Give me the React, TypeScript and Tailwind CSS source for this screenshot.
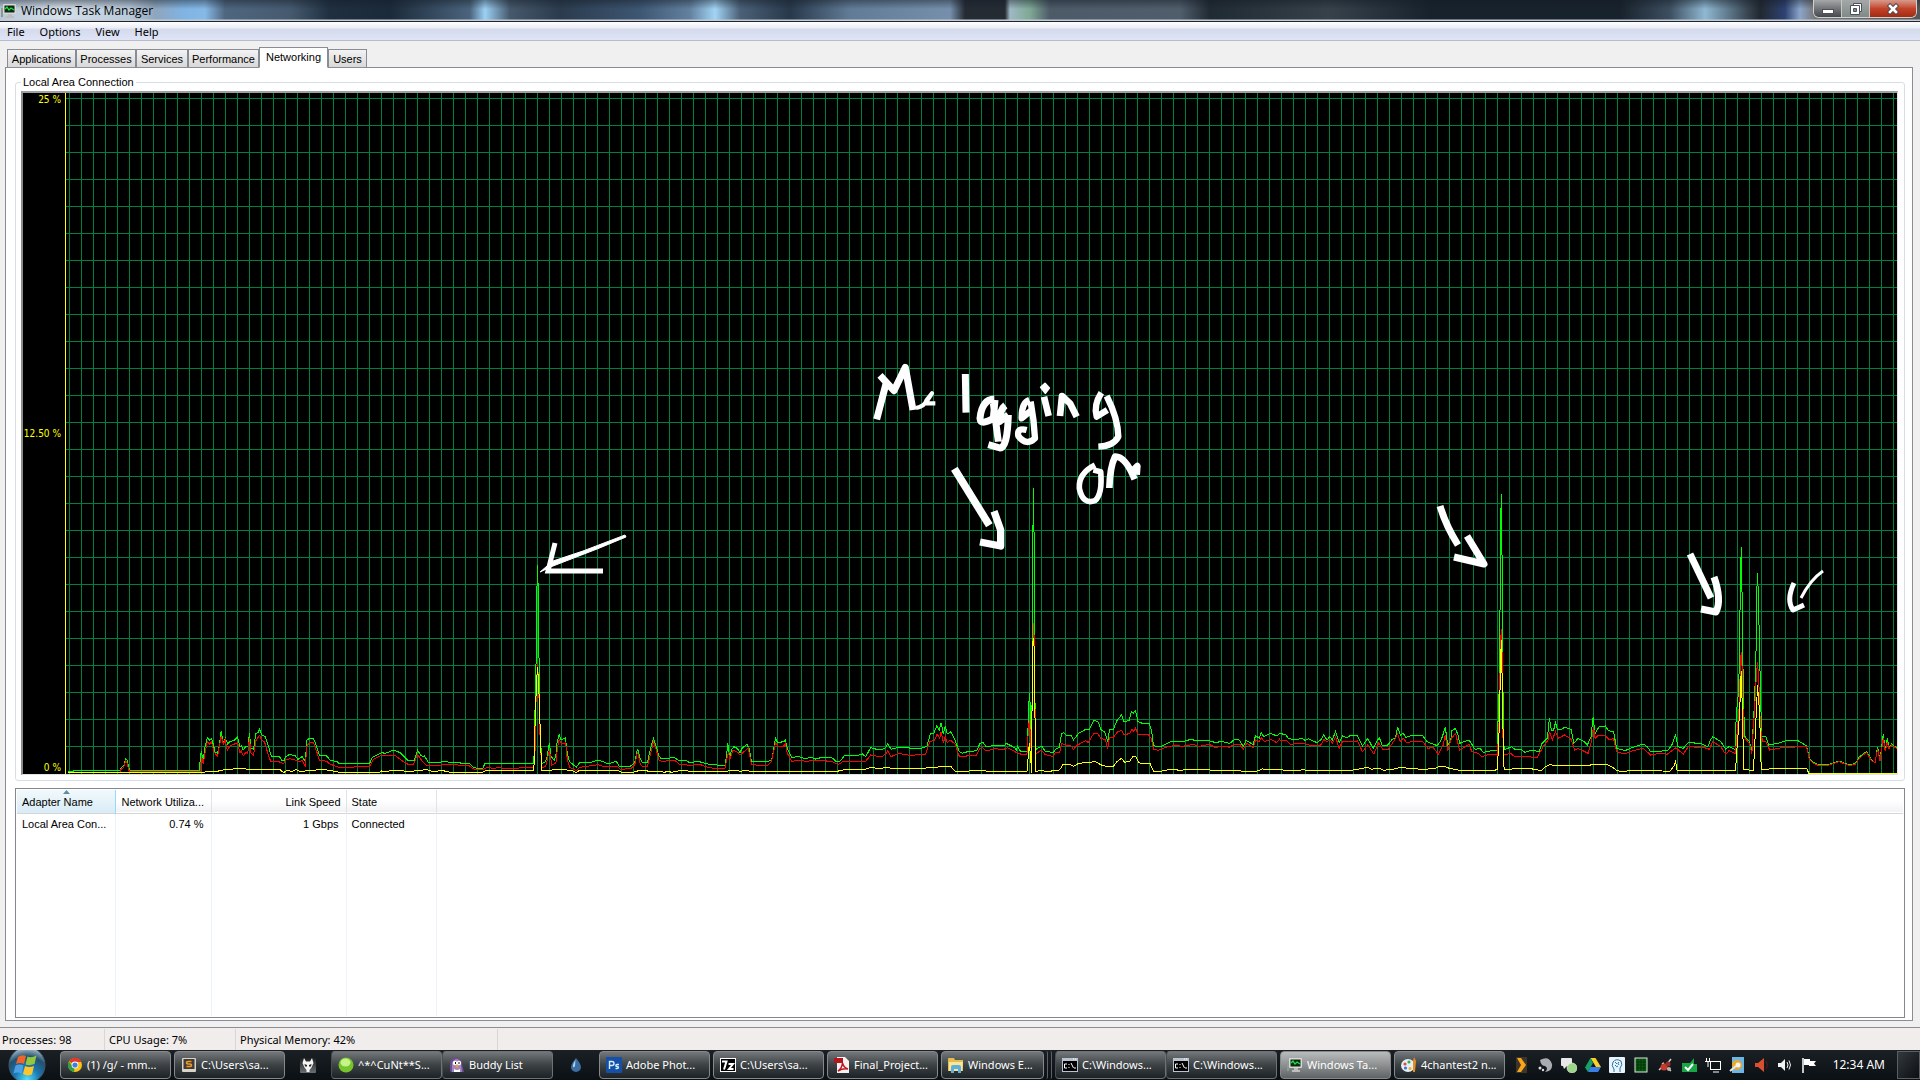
import type { ReactNode } from "react";

type Segment = { transform: string; green: string; red: string; yellow: string };

// Throughput samples, stored oversampled and scaled into chart space by each segment's transform.
const SEGMENTS: Segment[] = [
  {
    transform: "translate(0 560) scale(0.40816 0.33333)",
    green:
      "167,634 180,634 182,631 295,631 297,622 303,620 305,608 308,596 312,602 315,622 318,631 488,631 490,605 493,574 498,602 501,568 508,532 513,541 518,535 522,551 527,576 533,580 537,558 542,512 547,550 552,534 558,552 563,545 575,540 582,531 588,562 591,556 596,570 602,560 608,558 611,518 615,565 621,568 627,520 632,518 636,508 641,525 650,530 658,560 665,590 685,590 690,601 696,602 700,590 710,583 724,588 730,598 740,590 748,604 752,540 758,535 768,535 776,560 782,585 800,588 810,602 825,604 832,612 905,612 912,592 935,578 944,580 965,570 980,578 990,590 1000,602 1015,602 1023,570 1030,585 1036,590 1040,588 1050,608 1070,608 1090,604 1105,608 1150,610 1160,622 1170,625 1183,625 1188,610 1308,610 1310,490 1313,340 1315,110 1317,15 1319,110 1321,340 1323,490 1327,610 1335,608 1340,592 1346,548 1350,590 1358,600 1362,585 1365,545 1370,524 1375,540 1385,533 1390,580 1395,604 1412,622 1420,608 1450,606 1465,600 1480,606 1490,612 1510,604 1518,620 1545,618 1555,608 1562,566 1568,595",
    red:
      "167,638 295,637 296,629 303,622 308,602 312,610 315,629 318,636 490,636 494,590 498,612 503,575 508,545 513,552 518,546 524,575 533,590 542,528 547,552 552,540 557,572 563,558 582,548 588,578 591,572 596,588 602,578 607,580 611,535 615,580 621,585 627,542 636,526 641,540 648,545 655,575 663,604 685,606 695,612 700,600 710,596 728,602 735,605 740,602 748,618 752,558 758,548 768,548 778,582 782,600 800,604 808,612 830,622 905,620 915,598 932,588 970,588 985,602 1000,613 1013,614 1023,582 1033,602 1046,618 1070,618 1095,612 1150,618 1160,627 1183,628 1200,620 1205,626 1225,622 1235,626 1308,622 1311,570 1314,380 1317,310 1320,380 1322,500 1327,622 1337,620 1346,570 1352,615 1362,610 1366,560 1370,538 1376,552 1386,548 1390,600 1396,622 1412,632 1420,622 1465,614 1480,620 1512,618 1520,628 1545,626 1555,615 1562,575 1568,608",
    yellow:
      "167,638 500,637 507,634 533,634 540,631 560,628 590,625 610,628 685,628 695,638 702,631 715,634 725,629 735,634 760,632 790,628 812,632 832,637 930,637 935,633 945,636 960,631 985,632 1000,635 1045,629 1060,634 1085,632 1105,637 1183,637 1190,631 1308,631 1311,490 1314,380 1317,320 1320,380 1323,490 1327,631 1345,631 1370,628 1400,631 1412,638 1420,631 1515,631 1522,637 1550,637 1568,631",
  },
  {
    transform: "translate(640 560) scale(0.40816 0.33333)",
    green:
      "0,595 5,607 18,608 25,570 33,535 40,560 45,585 52,596 85,593 95,602 112,600 120,607 145,605 170,613 208,617 212,590 215,550 220,595 224,570 230,560 238,565 245,578 250,565 262,553 268,568 273,604 300,606 322,602 328,565 332,535 337,548 352,545 356,540 361,565 372,592 390,590 405,596 420,592 430,597 440,594 470,593 480,604 490,604 500,588 530,588 545,582 553,590 565,563 580,568 592,570 602,563 607,550 615,568 630,563 655,562 668,567 690,565 703,558 712,520 720,520 727,498 733,510 738,488 743,522 748,498 753,522 762,515 772,540 782,575 790,580 800,576 825,572 833,550 840,547 848,560 870,556 892,558 897,550 918,563 922,570 925,558 932,574 949,573 952,450 954,400 957,450 959,573 961,380 962,-18 964,-216 966,-18 967,380 970,568 985,558 992,573 1012,578 1020,565 1027,563 1033,520 1038,518 1045,527 1057,528 1062,540 1075,520 1092,508 1100,510 1112,480 1122,485 1130,510 1138,515 1146,545 1150,510 1160,507 1170,478 1180,465 1186,485 1198,482 1204,455 1208,460 1214,452 1220,485 1235,492 1247,490 1253,510 1258,555 1265,560 1280,558 1300,545 1335,543 1350,538 1365,543 1390,540 1410,548 1425,544 1445,550 1455,540 1468,540 1478,560 1485,541 1495,548 1502,555 1508,527 1517,535 1522,518 1528,530 1545,520 1560,528 1568,520",
    red:
      "0,610 5,619 18,619 25,585 33,545 40,570 47,602 55,604 85,601 97,613 125,616 145,612 160,620 180,625 208,625 212,600 217,575 220,600 228,570 240,577 245,585 255,575 265,563 273,612 290,617 312,616 322,605 332,548 340,560 352,558 356,550 361,580 372,604 395,600 405,604 430,601 470,604 485,614 497,605 520,604 553,604 565,585 592,591 602,582 607,571 615,590 633,580 660,586 700,583 710,545 722,540 728,522 734,535 738,515 743,548 748,530 753,548 760,540 772,552 782,588 795,590 805,586 823,588 833,565 840,563 848,573 870,566 890,569 900,563 920,576 932,582 948,584 952,500 954,480 957,530 959,600 961,400 963,240 964,190 966,240 967,400 970,582 983,570 992,583 1012,590 1018,577 1028,577 1034,550 1045,558 1055,556 1062,568 1072,555 1092,542 1098,548 1112,520 1122,522 1130,536 1140,538 1146,566 1150,532 1160,532 1170,515 1180,512 1186,525 1200,520 1205,508 1210,515 1214,505 1220,522 1245,524 1253,535 1258,568 1270,571 1285,563 1310,556 1330,559 1355,553 1370,559 1395,553 1410,563 1425,558 1445,562 1455,553 1470,553 1478,568 1487,549 1502,563 1508,540 1517,545 1522,532 1530,545 1545,538 1560,548 1568,536",
    yellow:
      "0,631 15,631 20,634 50,634 60,637 68,634 78,637 85,634 110,631 120,634 210,634 225,631 235,631 245,634 260,631 270,634 483,634 500,629 550,628 568,622 585,626 605,622 620,626 690,625 740,620 762,620 772,634 805,634 810,631 840,631 850,634 948,634 954,550 958,610 959,640 961,380 963,235 965,235 967,372 969,634 985,631 998,636 1015,631 1028,630 1037,612 1055,614 1062,619 1075,610 1115,605 1132,616 1145,620 1160,619 1168,605 1180,595 1187,607 1200,604 1207,590 1215,590 1222,608 1235,612 1250,612 1258,634 1280,633 1300,628 1325,631 1345,628 1390,628 1400,631 1465,631 1475,634 1510,634 1525,627 1568,628",
  },
  {
    transform: "translate(1280 480) scale(0.40816 0.33333)",
    green:
      "0,760 15,765 20,775 35,780 55,775 62,782 70,776 90,788 100,780 107,765 115,780 122,770 128,780 136,755 145,788 153,768 165,773 170,768 190,768 202,798 215,775 228,805 243,772 250,795 262,798 275,778 283,775 288,740 295,765 302,760 308,772 320,767 350,767 360,785 385,797 395,780 405,742 411,795 418,785 421,752 430,745 436,765 440,790 463,780 478,808 490,805 498,817 510,814 532,810 535,690 538,600 540,200 542,42 544,232 546,610 549,810 558,805 568,800 575,808 590,808 600,817 618,810 635,815 642,790 655,775 660,715 665,750 670,752 675,728 680,748 690,748 697,742 713,748 720,790 730,775 745,785 753,795 762,770 767,712 772,760 782,740 797,738 805,752 817,755 825,805 845,812 865,802 890,792 900,800 908,815 950,812 960,795 969,765 975,800 988,805 1000,788 1030,790 1048,800 1055,780 1060,770 1080,785 1092,808 1100,800 1115,808 1118,700 1124,630 1128,315 1130,202 1132,340 1135,625 1138,768 1150,785 1156,810 1162,680 1166,540 1168,340 1170,280 1172,345 1176,570 1180,770 1190,768 1197,795 1220,790 1245,780 1270,783 1290,797 1297,835 1305,845 1320,855 1345,853 1370,843 1395,855 1410,850 1420,830 1437,815 1450,840 1458,848 1464,800 1470,840 1478,763 1483,810 1488,775 1492,805 1498,792 1513,805",
    red:
      "0,780 18,783 25,793 45,790 60,790 75,797 100,795 107,778 115,785 122,778 128,790 136,770 145,805 153,785 190,783 202,815 215,795 230,822 242,788 252,808 265,808 278,785 288,762 295,785 302,775 310,788 325,784 350,785 362,805 375,802 388,823 400,795 405,765 411,812 420,775 430,760 440,810 463,793 470,815 485,820 495,830 515,822 532,825 536,765 540,520 542,447 544,520 546,765 549,825 565,820 572,828 600,830 630,832 645,800 657,780 660,755 667,780 675,755 682,775 697,765 712,775 722,810 730,805 755,820 762,790 768,740 772,775 780,765 797,768 807,780 817,775 825,815 845,822 865,812 890,805 908,825 930,820 948,823 970,803 988,823 1000,800 1040,803 1052,808 1060,785 1080,800 1092,823 1100,812 1115,820 1118,790 1125,680 1128,560 1130,515 1132,560 1136,770 1150,790 1156,822 1163,680 1167,590 1170,547 1173,600 1177,740 1182,785 1190,785 1200,810 1235,802 1290,800 1297,838 1305,848 1320,857 1345,855 1370,845 1395,857 1410,852 1420,834 1437,817 1450,843 1458,848 1464,806 1470,844 1478,775 1483,814 1488,785 1492,807 1498,795 1513,807",
    yellow:
      "0,868 18,873 45,873 55,868 70,873 90,870 125,873 150,873 175,871 190,868 215,862 225,868 240,864 255,871 285,866 295,862 320,866 355,868 380,865 390,859 405,860 415,865 440,871 532,870 536,790 540,580 542,480 544,580 547,790 549,868 610,865 640,872 650,860 663,853 670,857 755,858 765,853 800,853 815,862 825,872 845,876 855,871 900,871 955,874 965,858 969,845 973,871 1080,871 1090,873 1116,873 1120,800 1126,700 1130,572 1133,700 1136,868 1160,872 1166,720 1170,615 1175,700 1179,868 1200,867 1225,865 1290,865 1296,880 1513,880",
  },
];

const GRID_COLUMNS = Array.from({ length: 153 }, (_, i) => 69 + i * 12);
const GRID_ROWS = Array.from({ length: 25 }, (_, i) => 98 + i * 27);

function Trace({ points, color }: { points: string; color: string }) {
  return <polyline points={points} fill="none" stroke={color} strokeWidth="1" vectorEffect="non-scaling-stroke" />;
}

function Scribbles() {
  return (
    <g fill="none" stroke="#fff" strokeWidth="7" strokeLinejoin="round">
      <g transform="translate(860 350) scale(0.33333)" strokeWidth="20">
        <path d="M60 76 L79 97 L50 208 M79 97 L102 122 L136 52 L159 180" strokeWidth="21" />
        <path d="M168 174 Q195 168 200 150 L216 130 L196 160 L226 160" strokeWidth="13" />
        <path d="M316 72 L318 188" strokeWidth="21" />
        <path d="M403 147 Q366 148 360 205 Q362 228 400 205 L405 150 M400 160 L415 275 M436 166 Q420 178 418 215 L445 195 M445 195 Q442 295 420 294 L385 284" strokeWidth="21" />
        <path d="M508 150 Q484 158 485 205 L515 180 M512 155 Q522 210 525 265 Q500 290 475 258 Q470 232 500 240" strokeWidth="19" />
        <path d="M542 112 L555 100 L568 114 L556 130 Z" strokeWidth="5" fill="#fff" />
        <path d="M552 140 L566 198 M600 198 L606 138 L630 160 L650 200" strokeWidth="20" />
        <path d="M724 128 Q700 165 710 200 L742 180 M740 138 Q774 205 775 260 Q760 288 715 290" strokeWidth="19" />
        <path d="M705 345 Q655 370 658 415 Q668 465 705 452 Q728 432 722 365 L700 360" strokeWidth="17" />
        <path d="M748 414 Q750 350 765 320 Q796 318 824 388 M815 365 L832 348 L830 374" strokeWidth="20" />
        <path d="M283 356 L388 526" strokeWidth="23" />
        <path d="M402 484 L422 540 L422 588 L360 576" strokeWidth="22" />
      </g>
      <path d="M540 572 L553 561 L583 551 L625 535 L626 537 L597 549 L553 566 Z" fill="#fff" strokeWidth="1" />
      <path d="M555 543 L548 571 L603 571" strokeWidth="5" strokeLinejoin="miter" />
      <path d="M1440 506 Q1446 526 1458 545" />
      <path d="M1467 536 L1484 564 L1454 557" />
      <path d="M1690 554 Q1700 575 1711 598" />
      <path d="M1714 577 Q1722 600 1716 612 L1701 609" />
      <path d="M1794 583 Q1786 600 1793 610 L1804 605" strokeWidth="5" />
      <path d="M1823 571 Q1810 580 1801 598" strokeWidth="3" />
    </g>
  );
}

function NetworkGraph() {
  return (
    <div className="flex min-h-0 flex-1 border-t-2 border-r border-b border-l-2 border-t-[#a0a0a0] border-l-[#8c8c8c] border-r-[#e3e3e3] border-b-[#e3e3e3] bg-black">
      <div className="flex w-[42px] flex-none flex-col justify-between pt-px pr-1 text-right text-[10px] leading-3 whitespace-nowrap text-[#ffff00] [font-family:'DejaVu_Sans_Condensed','DejaVu_Sans',sans-serif]">
        <span>25 %</span>
        <span className="-ml-2">12.50 %</span>
        <span>0 %</span>
      </div>
      <svg
        className="block h-full min-w-0 flex-1"
        viewBox="65 93 1832 681"
        preserveAspectRatio="none"
        role="img"
        aria-label="Network utilization history"
      >
        <g stroke="#008040" shapeRendering="crispEdges">
          {GRID_COLUMNS.map((x) => (
            <path key={x} d={`M${x + 0.5} 93V774`} />
          ))}
          {GRID_ROWS.map((y) => (
            <path key={y} d={`M65 ${y + 0.5}H1897`} />
          ))}
        </g>
        <path d="M65.5 93V774" stroke="#ffff00" shapeRendering="crispEdges" />
        {SEGMENTS.map((s) => (
          <g key={s.transform} transform={s.transform} shapeRendering="crispEdges">
            <Trace points={s.green} color="#00ff00" />
            <Trace points={s.red} color="#ff0000" />
            <Trace points={s.yellow} color="#ffff00" />
          </g>
        ))}
        <Scribbles />
      </svg>
    </div>
  );
}

function Icon({ children, size = "h-4 w-4" }: { children: ReactNode; size?: string }) {
  return (
    <svg className={`${size} flex-none`} viewBox="0 0 16 16" aria-hidden="true">
      {children}
    </svg>
  );
}

const monitorIcon = (
  <Icon>
    <path d="M0 5h2v9H0z" fill="#8d9a90" />
    <rect x="2" y="1" width="13" height="10" rx="1" fill="#d8d8d8" />
    <rect x="3.5" y="2.5" width="10" height="7" fill="#0a2a12" />
    <path d="M4 6l2-2 2 3 2-2 3 2" stroke="#24dd45" fill="none" strokeWidth="1.3" />
    <path d="M7 11h4v2h2v2H5v-2h2z" fill="#bdbdbd" />
  </Icon>
);

const cmdIcon = (
  <Icon>
    <rect x="0" y="1" width="16" height="14" fill="#b9c3cf" />
    <rect x="1" y="4" width="14" height="10" fill="#000" />
    <path d="M5 7H2.500v4H5M7 7v1M7 10v1M9 6l2.500 5M12 11h2" stroke="#fff" fill="none" />
    <path d="M11 2h1M13 2h1" stroke="#fff" />
  </Icon>
);

const chromeIcon = (
  <Icon>
    <circle cx="8" cy="8" r="7" fill="#fbc116" />
    <path d="M8 8L2 4.300A7 7 0 0 1 14.500 5H8z" fill="#dc3b2e" />
    <path d="M8 8L7 15A7 7 0 0 1 1.900 4.500L5.500 9z" fill="#2f9e44" />
    <circle cx="8" cy="8" r="3.400" fill="#fff" />
    <circle cx="8" cy="8" r="2.600" fill="#3f7fe0" />
  </Icon>
);

const sublimeIcon = (
  <Icon>
    <rect x="1" y="1" width="14" height="14" rx="1" fill="#d9d3c8" />
    <rect x="2.500" y="2" width="11" height="10" fill="#3f3c39" />
    <path d="M10.500 4.500H7q-1.500 0-1.500 1.200T7 7h2q1.500 0 1.500 1.200T9 9.500H5.500" stroke="#f29a1f" strokeWidth="1.600" fill="none" />
  </Icon>
);

const foobarIcon = (
  <Icon>
    <defs>
      <linearGradient id="foobar" x1="0" y1="0" x2="0" y2="1">
        <stop offset="0" stopColor="#15181a" />
        <stop offset="1" stopColor="#6b6f72" />
      </linearGradient>
    </defs>
    <rect x="0" y="0" width="16" height="16" rx="1" fill="url(#foobar)" />
    <path d="M4 1L6 4.500h4L12 1l1.500 5-2 4.500L9.500 13v2h-3v-2L4.500 10.500 2.500 6z" fill="#f4f4f4" />
    <path d="M4.500 7l2.500 1v1.500H5zM11.500 7L9 8v1.500h2z" fill="#222" />
  </Icon>
);

const greenOrb = (
  <Icon>
    <circle cx="8" cy="8" r="7.500" fill="#76c52c" />
    <ellipse cx="7.500" cy="5.500" rx="5" ry="4" fill="#c8f38c" />
  </Icon>
);

const pidginIcon = (
  <Icon>
    <path d="M1 14V5q2-5 7-4 5 1 5 6l2 8H2z" fill="#6f4b91" />
    <path d="M3 15V6q2-4 5-4 4 1 4 5l1 8z" fill="#a386bd" />
    <circle cx="6" cy="6" r="2.200" fill="#fff" />
    <circle cx="10" cy="6" r="2.200" fill="#fff" />
    <path d="M6 5h1v2H6zM9.500 5h1v2h-1z" fill="#111" />
    <path d="M6 8h4l-2 3z" fill="#f2a023" />
    <path d="M5 12q3 2 6 0v3H5z" fill="#fff" />
  </Icon>
);

const dropIcon = (
  <Icon>
    <path d="M8 1q5 6 5 9a5 5 0 0 1-10 0q0-3 5-9z" fill="#3c6f9f" />
    <path d="M7.500 3Q4.500 7 5 10q1 1 2-1z" fill="#a9d3ef" />
  </Icon>
);

const photoshopIcon = (
  <Icon>
    <rect width="16" height="16" rx="1" fill="#1550a8" />
    <path d="M3.500 12V4.500H6q2 0 2 2T6 8.500H3.500M13 7.500h-2q-1.200 0-1.200 1t1.200 1q1.500 0 1.500 1t-1.500 1H9.500" stroke="#d6ecff" strokeWidth="1.400" fill="none" />
  </Icon>
);

const sevenZipIcon = (
  <Icon>
    <rect y="1" width="16" height="14" fill="#fff" />
    <rect x="1" y="2" width="14" height="12" fill="#000" />
    <path d="M2 4.500h4.500L4 12.500M8.500 7H13l-4 5h4.500" stroke="#fff" strokeWidth="2" fill="none" />
  </Icon>
);

const pdfIcon = (
  <Icon>
    <path d="M3 0h8l4 4v12H3z" fill="#f3f1f1" />
    <path d="M0 1h9v5H0z" fill="#b3161b" />
    <path d="M4 14q4-3 4.500-8Q10 11 14 12q-5-1-10 2z" fill="none" stroke="#c4161c" strokeWidth="1.500" />
  </Icon>
);

const explorerIcon = (
  <Icon>
    <path d="M0 2q0-1 1-1h5l1 2h8v11H0z" fill="#e5bd4f" />
    <path d="M1 5h14l-1 9H1z" fill="#fbe596" />
    <path d="M3 16V10q0-2 2-2h6q2 0 2 2v6h-3v-4H6v4z" fill="#5bb0e0" />
  </Icon>
);

const paintIcon = (
  <Icon>
    <ellipse cx="7" cy="8.500" rx="7" ry="6.500" fill="#e3eef5" />
    <circle cx="4" cy="7" r="1.600" fill="#e04b3c" />
    <circle cx="8" cy="5" r="1.600" fill="#3fa95a" />
    <circle cx="4.500" cy="11" r="1.600" fill="#3a78cf" />
    <circle cx="9" cy="11.500" r="1.500" fill="#e8b22f" />
    <path d="M13 0l2 4-1 11h-2V4z" fill="#e88a25" />
  </Icon>
);

function TaskButton({ icon, label, active, joined, narrow }: { icon: ReactNode; label: string; active?: boolean; joined?: boolean; narrow?: boolean }) {
  return (
    <button
      className={[
        "flex h-7 min-w-0 flex-none items-center gap-1 overflow-hidden rounded-sm border px-1.5 text-left text-[11px] whitespace-nowrap text-white",
        narrow ? "w-[103px]" : "w-[111px]",
        joined ? "border-[#6d7275] border-l-[#4a4e51]" : "border-[#85898c]",
        active ? "bg-linear-to-b from-[#b9bbbc] via-[#8e9192] to-[#5f6365]" : "bg-linear-to-b from-[#74787a] via-[#3d4245] to-[#1d2226]",
      ].join(" ")}
    >
      {icon}
      <span>{label}</span>
    </button>
  );
}

function StartOrb() {
  return (
    <button className="flex h-[30px] w-[54px] flex-none items-center justify-center" aria-label="Start">
      <svg className="-my-1 h-[38px] w-[38px] flex-none" viewBox="0 0 38 38" aria-hidden="true">
        <defs>
          <radialGradient id="orb" cx="50%" cy="90%" r="85%">
            <stop offset="0" stopColor="#4fe0ff" />
            <stop offset="0.4" stopColor="#1b78b4" />
            <stop offset="0.75" stopColor="#24506f" />
            <stop offset="1" stopColor="#9db4c2" />
          </radialGradient>
        </defs>
        <circle cx="19" cy="19" r="18" fill="url(#orb)" stroke="#3d5a6c" />
        <path d="M10 11q4-3 8-1l-2 8q-4-2-8 0z" fill="#f0642a" />
        <path d="M19.500 10.500q4 2 9-1l-2 8.500q-5 2-9 .5z" fill="#92c83e" />
        <path d="M7.500 19.500q4-2 8 0l-2 8q-4-2-8 0z" fill="#4ea0e4" />
        <path d="M17 20q4 2 9 0l-2 8.500q-5 2-9-.5z" fill="#fcc52d" />
      </svg>
    </button>
  );
}

const TRAY: { name: string; art: ReactNode }[] = [
  { name: "Player", art: <><rect x="3" width="11" height="16" fill="#3c3528" /><path d="M4 1h4l5 7-5 7H4l4-7z" fill="#f9a51c" /></> },
  { name: "Steam", art: <><path d="M3 3q9-5 12 4 1 7-7 8 4-4 0-6Q4 9 3 3z" fill="#a9adb0" /><circle cx="3" cy="11" r="1.500" fill="#ddd" /><circle cx="6" cy="13" r="1.200" fill="#ddd" /></> },
  { name: "Messenger", art: <><rect x="0" y="1" width="11" height="8" rx="1" fill="#e8e8e8" /><path d="M2 9h4l-3 3z" fill="#e8e8e8" /><circle cx="11" cy="11" r="5" fill="#9bd58a" stroke="#e4ffe0" strokeWidth=".6" /></> },
  { name: "Drive", art: <><path d="M5.500 1h5L16 10h-5z" fill="#fbd02c" /><path d="M5.500 1L0 10.500 3 15l5-9z" fill="#15a266" /><path d="M5.500 10H16l-3 5H3z" fill="#3a7fe8" /></> },
  { name: "Assistant", art: <><rect width="16" height="16" rx="1" fill="#e9f3fa" /><path d="M5 15V12Q2 9 4 5q3-4 8-1 2 4-1 7v4M6 5l2 2M10 5q-2 1 0 3M6 8q2 3 3 1" stroke="#2876ae" fill="none" /></> },
  { name: "CPU meter", art: <><rect x="2" y="1" width="12" height="14" fill="#0a5a14" stroke="#d6e8d6" /><path d="M5 2v12M8 2v12M11 2v12M3 5h10M3 8h10M3 11h10" stroke="#053508" /></> },
  { name: "Fan control", art: <><path d="M2 13l3-3M10 7l4-5M10 11l4 3M5 7l2-1" stroke="#d2d2d2" strokeWidth="1.500" /><circle cx="7" cy="10" r="3.500" fill="#c43b2f" /><circle cx="11" cy="7" r="2.500" fill="#9c3027" /><circle cx="12" cy="12" r="2" fill="#b9b3b0" /></> },
  { name: "Safely remove", art: <><path d="M1 6h8l4-5v6l3 0v8H1z" fill="#18a544" /><path d="M4 10l3 3 5-6" stroke="#fff" strokeWidth="2" fill="none" /></> },
  { name: "Network", art: <><rect x="5.500" y="4.500" width="10" height="8" fill="#101417" stroke="#fff" /><path d="M1.500 1v3M4.500 1v3M0 4.500h6M3 5v5M8 15h6" stroke="#fff" /></> },
  { name: "Updates", art: <><rect x="3" y="0" width="12" height="16" fill="#6bb6e4" /><circle cx="8" cy="8" r="5" fill="#f5a623" /><circle cx="9" cy="8" r="2.500" fill="#eaf6ff" /><path d="M1 14L7 9" stroke="#e8e8e8" strokeWidth="2" /></> },
  { name: "Audio manager", art: <><path d="M2 6h3l6-5v14l-6-5H2z" fill="#d8502f" /><path d="M13 4q3 4 0 8" stroke="#5b1a10" fill="none" /></> },
  { name: "Volume", art: <><path d="M1 6h3l4-4v12l-4-4H1z" fill="#f2f2f2" /><path d="M10 5q2 3 0 6M12 3.500q3 4.500 0 9" stroke="#f2f2f2" fill="none" /></> },
  { name: "Action center", art: <><path d="M2 1v15" stroke="#fff" strokeWidth="1.500" /><path d="M3 2h6v2h6l-2 2.500 2 2.500H8V8H3z" fill="#fff" /></> },
];

function Taskbar() {
  return (
    <footer className="flex h-[30px] flex-none items-center overflow-hidden bg-linear-to-b from-[#1a2024] to-[#0b1014] text-white [font-family:'Noto_Sans',sans-serif]">
      <StartOrb />
      <div className="ml-1.5 flex items-center gap-[3px]">
        <TaskButton icon={chromeIcon} label="(1) /g/ - mm..." />
        <TaskButton icon={sublimeIcon} label="C:\Users\sa..." />
        <button className="flex w-10 justify-center" aria-label="foobar2000">{foobarIcon}</button>
        <div className="flex">
          <TaskButton icon={greenOrb} label="^*^CuNt**S..." joined />
          <TaskButton icon={pidginIcon} label="Buddy List" joined />
        </div>
        <button className="flex w-10 justify-center" aria-label="Rainmeter">{dropIcon}</button>
        <TaskButton icon={photoshopIcon} label="Adobe Phot..." />
        <TaskButton icon={sevenZipIcon} label="C:\Users\sa..." />
        <TaskButton icon={pdfIcon} label="Final_Project..." />
        <div className="flex w-[111px] gap-0.5">
          <TaskButton icon={explorerIcon} label="Windows E..." narrow />
          <span className="h-7 w-0.5 rounded-r-sm border-r border-[#5d6265]" />
          <span className="h-7 w-0.5 rounded-r-sm border-r border-[#5d6265]" />
        </div>
        <div className="flex">
          <TaskButton icon={cmdIcon} label="C:\Windows..." joined />
          <TaskButton icon={cmdIcon} label="C:\Windows..." joined />
        </div>
        <TaskButton icon={monitorIcon} label="Windows Ta..." active />
        <TaskButton icon={paintIcon} label="4chantest2 n..." />
      </div>
      <div className="ml-auto flex flex-none items-center gap-2">
        {TRAY.map((t) => (
          <button key={t.name} aria-label={t.name}>
            <Icon>{t.art}</Icon>
          </button>
        ))}
      </div>
      <time className="ml-4 flex-none text-[12px] whitespace-nowrap">12:34 AM</time>
      <button className="ml-3 h-7 w-[23px] flex-none border border-[#5a5f63] bg-linear-to-br from-[#34393d] to-[#0c1013]" aria-label="Show desktop" />
    </footer>
  );
}

function TitleBar() {
  return (
    <header className="flex h-[22px] flex-none items-center border-b border-[#20242e] bg-[linear-gradient(180deg,rgba(20,28,38,0.45)_0,transparent_9px,transparent_19px,#c3ccd6_20px),linear-gradient(90deg,#b9c8d8_0,#d5e0ea_60px,#b8c9da_130px,#8fa5bc_155px,#7fb4e4_185px,#86b9e6_205px,#4e667f_225px,#465a6f_290px,#1f2f40_330px,#1b2a3a_390px,#4b647d_470px,#9bd0f4_485px,#46586b_510px,#2b3b4d_560px,#3d5672_640px,#63819f_690px,#a2d4f5_715px,#4b6077_740px,#27384a_790px,#617b96_850px,#7690ac_950px,#252b33_965px,#252b33_1005px,#9fb9c4_1010px,#7fa894_1030px,#4d5a68_1050px,#505d6b_1180px,#202a33_1210px,#36414a_1330px,#17222d_1430px,#18222c_1620px,#3d4f60_1670px,#8fb8d2_1705px,#3d4c59_1745px,#22282f_1760px,#2e4272_1785px,#8ba5c9_1800px,#777_1815px,#555_100%)] text-black">
      <div className="flex items-center gap-1 pl-px [font-family:'Open_Sans',sans-serif]">
        {monitorIcon}
        <h1 className="text-[12px] leading-4">Windows Task Manager</h1>
      </div>
      <div className="mr-[3px] ml-auto flex h-[18px] self-start overflow-hidden rounded-b-md border border-t-0 border-[#d0d0d0]">
        <button className="flex w-7 items-center justify-center border-r border-[#c8c8c8] bg-linear-to-b from-[#a5a7a9] to-[#45494d]" aria-label="Minimize">
          <svg className="h-3 w-3.5" viewBox="0 0 14 12" aria-hidden="true"><rect x="1.500" y="6.500" width="11" height="4" fill="#fff" stroke="#4c5058" /></svg>
        </button>
        <button className="flex w-7 items-center justify-center border-r border-[#c8c8c8] bg-linear-to-b from-[#a5a7a9] to-[#7f8a86]" aria-label="Restore">
          <svg className="h-3 w-3.5" viewBox="0 0 14 12" aria-hidden="true">
            <path d="M4.500 .5h8v8h-8z" fill="#fff" stroke="#4c5058" />
            <path d="M1.500 2.500h9v9h-9z" fill="#fff" stroke="#4c5058" />
            <path d="M4.500 5.500h3v3h-3z" fill="#888" stroke="#4c5058" />
          </svg>
        </button>
        <button className="flex w-[46px] items-center justify-center bg-linear-to-b from-[#d59a8c] via-[#c2432a] to-[#a52810]" aria-label="Close">
          <svg className="h-3 w-3.5" viewBox="0 0 14 12" aria-hidden="true">
            <path d="M4 3l6 6M10 3l-6 6" stroke="#4c4a50" strokeWidth="4.500" strokeLinecap="square" />
            <path d="M4 3l6 6M10 3l-6 6" stroke="#fff" strokeWidth="2.600" strokeLinecap="square" />
          </svg>
        </button>
      </div>
    </header>
  );
}

const TABS = [
  { label: "Applications", width: "w-[69px]" },
  { label: "Processes", width: "w-[60px]" },
  { label: "Services", width: "w-[52px]" },
  { label: "Performance", width: "w-[71px]" },
  { label: "Networking", width: "w-[69px]" },
  { label: "Users", width: "w-[39px]" },
];

function AdapterList() {
  return (
    <section className="mr-[7px] mb-0.5 ml-[9px] h-[230px] flex-none border border-[#828790] bg-white p-px">
      <table className="h-full w-full table-fixed border-collapse text-left">
        <colgroup>
          <col className="w-[98px]" />
          <col className="w-[96px]" />
          <col className="w-[135px]" />
          <col className="w-[90px]" />
          <col />
        </colgroup>
        <thead>
          <tr className="h-[23px] border-b border-[#d5d5d5] bg-linear-to-b from-white via-white to-[#f1f2f4]">
            <th className="relative border-r border-[#96d9f9] bg-linear-to-b from-[#f2f9fc] to-[#d8ecf6] px-[5px] pt-0.5 font-normal whitespace-nowrap">
              <svg className="absolute top-0 left-[46px] h-1 w-[7px]" viewBox="0 0 7 4" aria-hidden="true"><path d="M0 4L3.500 0 7 4z" fill="#5f8ba5" /></svg>
              Adapter Name
            </th>
            <th className="border-r border-[#e2e3e5] pt-0.5 pl-1.5 font-normal whitespace-nowrap">Network Utiliza...</th>
            <th className="border-r border-[#e2e3e5] pt-0.5 pr-[5px] text-right font-normal">Link Speed</th>
            <th className="border-r border-[#e2e3e5] px-[5px] pt-0.5 font-normal">State</th>
            <th />
          </tr>
        </thead>
        <tbody>
          <tr className="h-[21px]">
            <td className="border-r border-[#edf3fb] px-[5px] whitespace-nowrap">Local Area Con...</td>
            <td className="border-r border-[#edf3fb] pr-[7px] text-right">0.74 %</td>
            <td className="border-r border-[#edf3fb] pr-[7px] text-right">1 Gbps</td>
            <td className="border-r border-[#edf3fb] px-[5px]">Connected</td>
            <td />
          </tr>
          <tr>
            <td className="border-r border-[#edf3fb]" />
            <td className="border-r border-[#edf3fb]" />
            <td className="border-r border-[#edf3fb]" />
            <td className="border-r border-[#edf3fb]" />
            <td />
          </tr>
        </tbody>
      </table>
    </section>
  );
}

export default function App() {
  return (
    <div className="flex h-screen flex-col overflow-hidden bg-[#f0f0f0] text-[11px] leading-[14px] text-black [font-family:'Liberation_Sans',Arial,sans-serif]">
      <TitleBar />
      <nav className="flex h-[19px] flex-none items-center gap-[15px] border-b border-[#b6bccc] bg-[linear-gradient(#fff_0,#e9ecf6_35%,#d4daec_38%,#dfe5f6_100%)] pt-0.5 pl-[7px] [font-family:'Noto_Sans',sans-serif]">
        {["File", "Options", "View", "Help"].map((item) => (
          <button key={item} className="text-[11px]">{item}</button>
        ))}
      </nav>
      <main className="flex min-h-0 flex-1 flex-col px-[5px] pt-1.5 pb-1.5">
        <div className="relative -mb-px flex h-[21px] flex-none items-end pl-0.5" role="tablist">
          {TABS.map(({ label, width }) => {
            const selected = label === "Networking";
            return (
              <button
                key={label}
                role="tab"
                aria-selected={selected}
                className={[
                  "border border-[#898c95] text-center whitespace-nowrap",
                  width,
                  selected ? "h-[21px] border-b-white bg-white pb-0.5" : "h-[19px] bg-linear-to-b from-[#f3f3f3] to-[#d8d8d8]",
                ].join(" ")}
              >
                {label}
              </button>
            );
          })}
        </div>
        <div className="mr-0.5 flex min-h-0 flex-1 flex-col border border-[#898c95] bg-white">
          <fieldset className="mt-[7px] mr-[7px] mb-[7px] ml-[9px] flex min-h-0 min-w-0 flex-1 flex-col rounded-[3px] border border-[#d5dfe5] pr-1.5 pb-[5px] pl-[5px]">
            <legend className="px-0.5">Local Area Connection</legend>
            <div className="flex min-h-0 flex-1 flex-col pt-0.5">
              <NetworkGraph />
            </div>
          </fieldset>
          <AdapterList />
        </div>
      </main>
      <div className="flex h-[23px] flex-none items-stretch border-t border-[#8e8e8e] bg-[#f0edec] pt-px [font-family:'Noto_Sans',sans-serif]">
        <span className="flex w-[105px] items-center border-r border-[#d7d7d7] pl-0.5">Processes: 98</span>
        <span className="flex w-[131px] items-center border-r border-[#d7d7d7] pl-1">CPU Usage: 7%</span>
        <span className="flex w-[262px] items-center border-r border-[#d7d7d7] pl-1">Physical Memory: 42%</span>
      </div>
      <Taskbar />
    </div>
  );
}
